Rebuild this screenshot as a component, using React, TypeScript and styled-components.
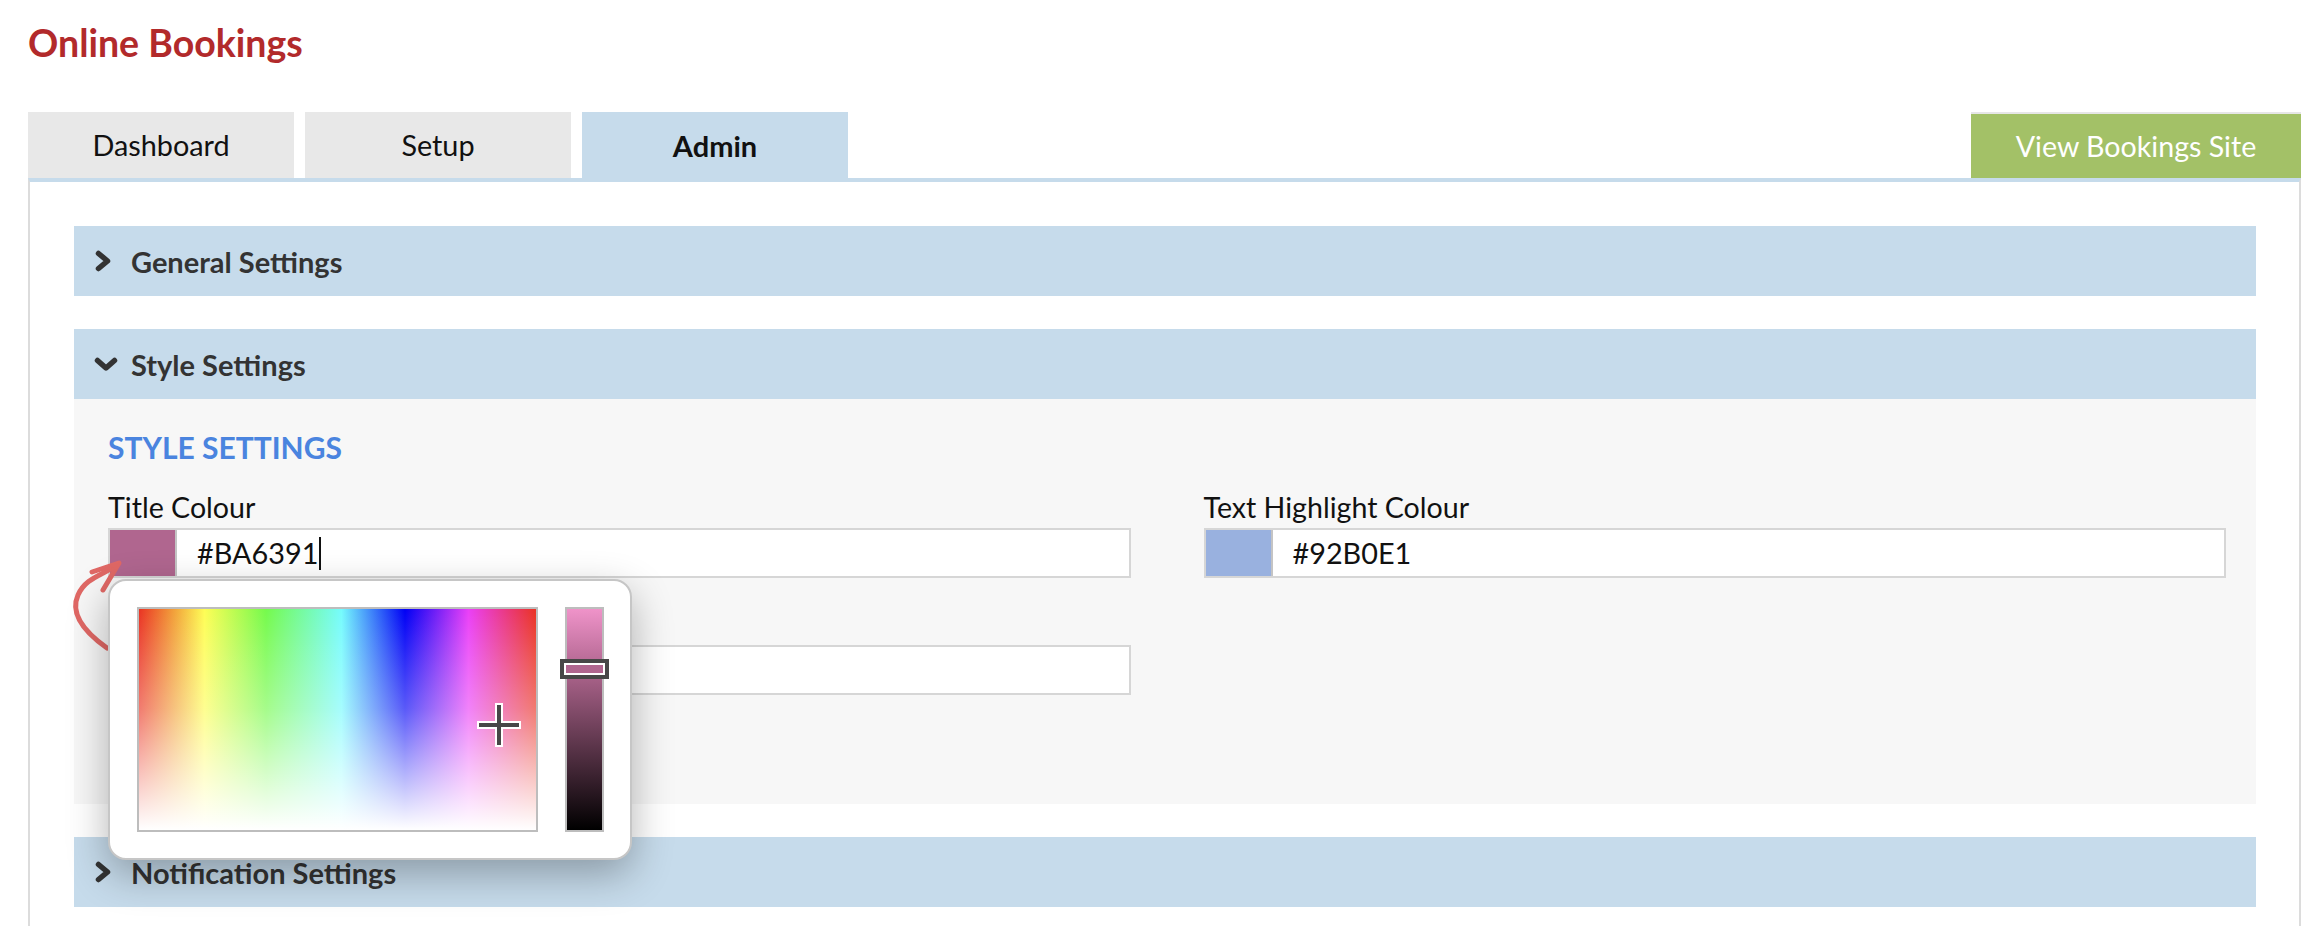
import React from "react";
import styled, { createGlobalStyle } from "styled-components";

const GlobalStyle = createGlobalStyle`
  body {
    margin: 0;
    background: #fff;
    font-family: Lato, "Open Sans", "Liberation Sans", sans-serif;
    color: #111;
  }
`;

const Page = styled.div`
  padding: 0 15px 0 28px;
`;

const Title = styled.h1`
  margin: 0;
  padding-top: 21px;
  font-size: 37.5px;
  line-height: 44px;
  font-weight: 700;
  color: #b22a2b;
`;

const TabBar = styled.div`
  display: flex;
  align-items: flex-end;
  gap: 11px;
  margin-top: 47px;
  height: 66px;
`;

const Tab = styled.div<{ $active?: boolean }>`
  width: 266px;
  height: 66px;
  display: flex;
  align-items: center;
  justify-content: center;
  font-size: ${(p) => (p.$active ? "29px" : "28.8px")};
  font-weight: ${(p) => (p.$active ? 700 : 400)};
  background: ${(p) => (p.$active ? "#c6dbeb" : "#e8e8e8")};
  color: #111;
`;

const Spacer = styled.div`
  flex: 1;
`;

const SiteButton = styled.div`
  width: 330px;
  height: 64px;
  border-top: 2px solid #e6e6e6;
  background: #a3c167;
  color: #fff;
  font-size: 28.6px;
  display: flex;
  align-items: center;
  justify-content: center;
`;

const Panel = styled.div`
  border-top: 4px solid #c6dbeb;
  border-left: 2px solid #dcdcdc;
  border-right: 2px solid #dcdcdc;
  padding: 44px 43px 40px 44px;
`;

const Section = styled.div`
  & + & {
    margin-top: 33px;
  }
`;

const SectionHeader = styled.div`
  height: 70px;
  background: #c6dbeb;
  display: flex;
  align-items: center;
  gap: 13px;
  padding-left: 20px;
  font-size: 29px;
  font-weight: 700;
  color: #333;
`;

const ChevronBox = styled.span`
  width: 24px;
  display: flex;
  align-items: center;
  justify-content: flex-start;
`;

const SectionBody = styled.div`
  background: #f7f7f7;
  padding: 30px 30px 109px 34px;
`;

const BodyHeading = styled.h2`
  margin: 0 0 25px;
  font-size: 30px;
  line-height: 36px;
  font-weight: 700;
  color: #4a84df;
`;

const FieldGrid = styled.div`
  display: grid;
  grid-template-columns: 1fr 1fr;
  column-gap: 73px;
  row-gap: 29px;
`;

const Field = styled.div``;

const Label = styled.div`
  font-size: 28.6px;
  line-height: 34px;
  color: #111;
  margin-bottom: 4px;
`;

const InputWrap = styled.div`
  position: relative;
`;

const ColorInput = styled.div`
  height: 50px;
  box-sizing: border-box;
  border: 2px solid #d6d6d6;
  background: #fff;
  display: flex;
  align-items: stretch;
`;

const Swatch = styled.div<{ $color: string }>`
  width: 65px;
  background: ${(p) => p.$color};
  border-right: 2px solid #c4c4c4;
`;

const Value = styled.div`
  display: flex;
  align-items: center;
  padding-left: 20px;
  font-size: 28.8px;
  color: #111;
`;

const Caret = styled.span`
  display: inline-block;
  width: 2px;
  height: 33px;
  margin-left: 1px;
  background: #111;
`;

const Popup = styled.div`
  position: absolute;
  z-index: 10;
  top: calc(100% + 1px);
  left: 0;
  width: 524px;
  box-sizing: border-box;
  display: flex;
  gap: 27px;
  padding: 26px 26px 26px 27px;
  background: #fff;
  border: 2px solid #c6c6c6;
  border-radius: 18px;
  box-shadow: 0 14px 40px rgba(0, 0, 0, 0.3);
`;

const SatBox = styled.div`
  position: relative;
  width: 401px;
  height: 225px;
  box-sizing: border-box;
  border: 2px solid #bdbdbd;
  background: linear-gradient(to bottom, rgba(255, 255, 255, 0) 0%, rgba(255, 255, 255, 0.35) 45%, #fff 100%),
    linear-gradient(
      to right,
      #ea3323 0%,
      #f2a33a 9%,
      #fefd55 16.5%,
      #75fa4c 32%,
      #75fbfd 51%,
      #0000f5 67%,
      #ea3ff7 83%,
      #ea3323 100%
    );
`;

const Crosshair = styled.svg`
  position: absolute;
  left: 337px;
  top: 93px;
`;

const ValueSlider = styled.div`
  position: relative;
  width: 39px;
  height: 225px;
  box-sizing: border-box;
  border: 2px solid #bdbdbd;
  background: linear-gradient(to bottom, #ef93c9 0%, #b0668f 27%, #000 100%);
`;

const Handle = styled.div`
  position: absolute;
  left: -7px;
  top: 50px;
  width: 49px;
  height: 20px;
  box-sizing: border-box;
  border: 4px solid #474747;
  background: #b0668f;
  box-shadow: inset 0 0 0 2px #fff;
`;

const Arrow = styled.svg`
  position: absolute;
  left: -40px;
  top: 25px;
  overflow: visible;
  z-index: 5;
`;

function Chevron({ open }: { open?: boolean }) {
  return (
    <ChevronBox>
      {open ? (
        <svg width="24" height="15" viewBox="0 0 24 15">
          <polyline points="3.5,3.5 12,11 20.5,3.5" fill="none" stroke="#333" strokeWidth="5.5" strokeLinejoin="round" strokeLinecap="round" />
        </svg>
      ) : (
        <svg width="19" height="22" viewBox="0 0 19 22">
          <polyline points="4.5,3.5 13.5,11 4.5,18.5" fill="none" stroke="#333" strokeWidth="5.5" strokeLinejoin="round" strokeLinecap="round" />
        </svg>
      )}
    </ChevronBox>
  );
}

function ColorField({
  label,
  color,
  value,
  focused,
}: {
  label: string;
  color: string;
  value?: string;
  focused?: boolean;
}) {
  return (
    <Field>
      <Label>{label}</Label>
      <InputWrap>
        <ColorInput>
          <Swatch $color={color} />
          <Value>
            {value}
            {focused && <Caret />}
          </Value>
        </ColorInput>
        {focused && (
          <>
            <Arrow width="60" height="105" viewBox="0 0 60 105">
              <path d="M39 95 C15 78 2 60 10 42 S36 22 50 11" fill="none" stroke="#e06865" strokeWidth="5" strokeLinecap="round" />
              <polyline points="24,19 51,10 35,37" fill="none" stroke="#e06865" strokeWidth="5" strokeLinejoin="round" strokeLinecap="round" />
            </Arrow>
            <Popup>
              <SatBox>
                <Crosshair width="46" height="46" viewBox="0 0 46 46">
                  <path d="M1 23H45M23 1V45" stroke="#fff" strokeWidth="8" />
                  <path d="M3 23H43M23 3V43" stroke="#474747" strokeWidth="4" />
                </Crosshair>
              </SatBox>
              <ValueSlider>
                <Handle />
              </ValueSlider>
            </Popup>
          </>
        )}
      </InputWrap>
    </Field>
  );
}

export default function App() {
  return (
    <Page>
      <GlobalStyle />
      <Title>Online Bookings</Title>
      <TabBar>
        <Tab>Dashboard</Tab>
        <Tab>Setup</Tab>
        <Tab $active>Admin</Tab>
        <Spacer />
        <SiteButton>View Bookings Site</SiteButton>
      </TabBar>
      <Panel>
        <Section>
          <SectionHeader>
            <Chevron />
            General Settings
          </SectionHeader>
        </Section>
        <Section>
          <SectionHeader>
            <Chevron open />
            Style Settings
          </SectionHeader>
          <SectionBody>
            <BodyHeading>STYLE SETTINGS</BodyHeading>
            <FieldGrid>
              <ColorField label="Title Colour" color="#b0668f" value="#BA6391" focused />
              <ColorField label="Text Highlight Colour" color="#99b1df" value="#92B0E1" />
              <ColorField label="Background Colour" color="#ffffff" value="#FFFFFF" />
            </FieldGrid>
          </SectionBody>
        </Section>
        <Section>
          <SectionHeader>
            <Chevron />
            Notification Settings
          </SectionHeader>
        </Section>
      </Panel>
    </Page>
  );
}
